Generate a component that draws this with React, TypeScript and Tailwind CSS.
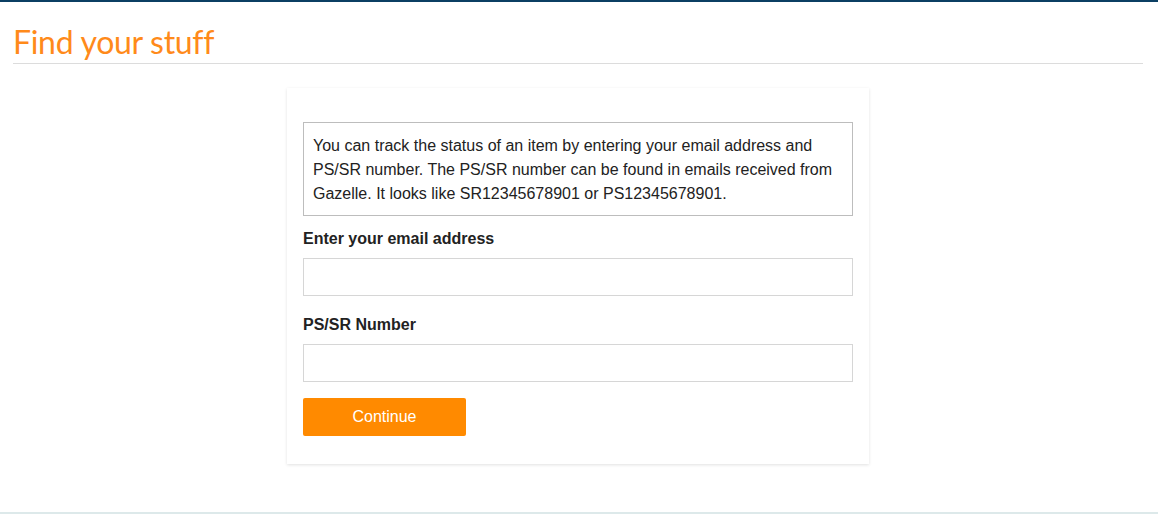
import React from "react";

export default function App() {
  return (
    <div className="min-h-[514px] bg-white flex flex-col border-t-2 border-[#0b3f63] font-['Liberation_Sans',Arial,sans-serif] text-[#333]">
      <div className="px-[13px] pt-[21px]">
        <h1 className="font-['Lato',sans-serif] font-normal text-[32px] leading-[38px] text-[#ff8a1a] tracking-[-0.3px] pb-[2px] border-b border-[#dcdcdc] mr-[2px]">
          Find your stuff
        </h1>
      </div>

      <div className="flex justify-center pt-[24px] pb-[48px] flex-1">
        <div className="w-[582px] h-[376px] ml-[-2px] bg-white shadow-[0_1px_3px_rgba(0,0,0,0.12)] px-[16px] pt-[34px] pb-[28px]">
          <div className="border border-[#bdbdbd] pl-[9px] pr-[10px] pt-[11px] pb-[9px] text-[16px] leading-[24px] text-[#222]">
            You can track the status of an item by entering your email address and
            <br />
            PS/SR number. The PS/SR number can be found in emails received from
            <br />
            Gazelle. It looks like SR12345678901 or PS12345678901.
          </div>

          <label className="block mt-[13px] text-[16px] leading-[20px] font-bold text-[#222]">
            Enter your email address
          </label>
          <input
            type="email"
            className="block w-full h-[38px] mt-[9px] border border-[#d6d6d6] px-2 outline-none"
          />

          <label className="block mt-[19px] text-[16px] leading-[20px] font-bold text-[#222]">
            PS/SR Number
          </label>
          <input
            type="text"
            className="block w-full h-[38px] mt-[9px] border border-[#d6d6d6] px-2 outline-none"
          />

          <button className="mt-[16px] w-[163px] h-[38px] bg-[#ff8a00] text-white text-[16px] rounded-[2px]">
            Continue
          </button>
        </div>
      </div>

      <div className="h-[2px] bg-[#dde9ea]" />
    </div>
  );
}
